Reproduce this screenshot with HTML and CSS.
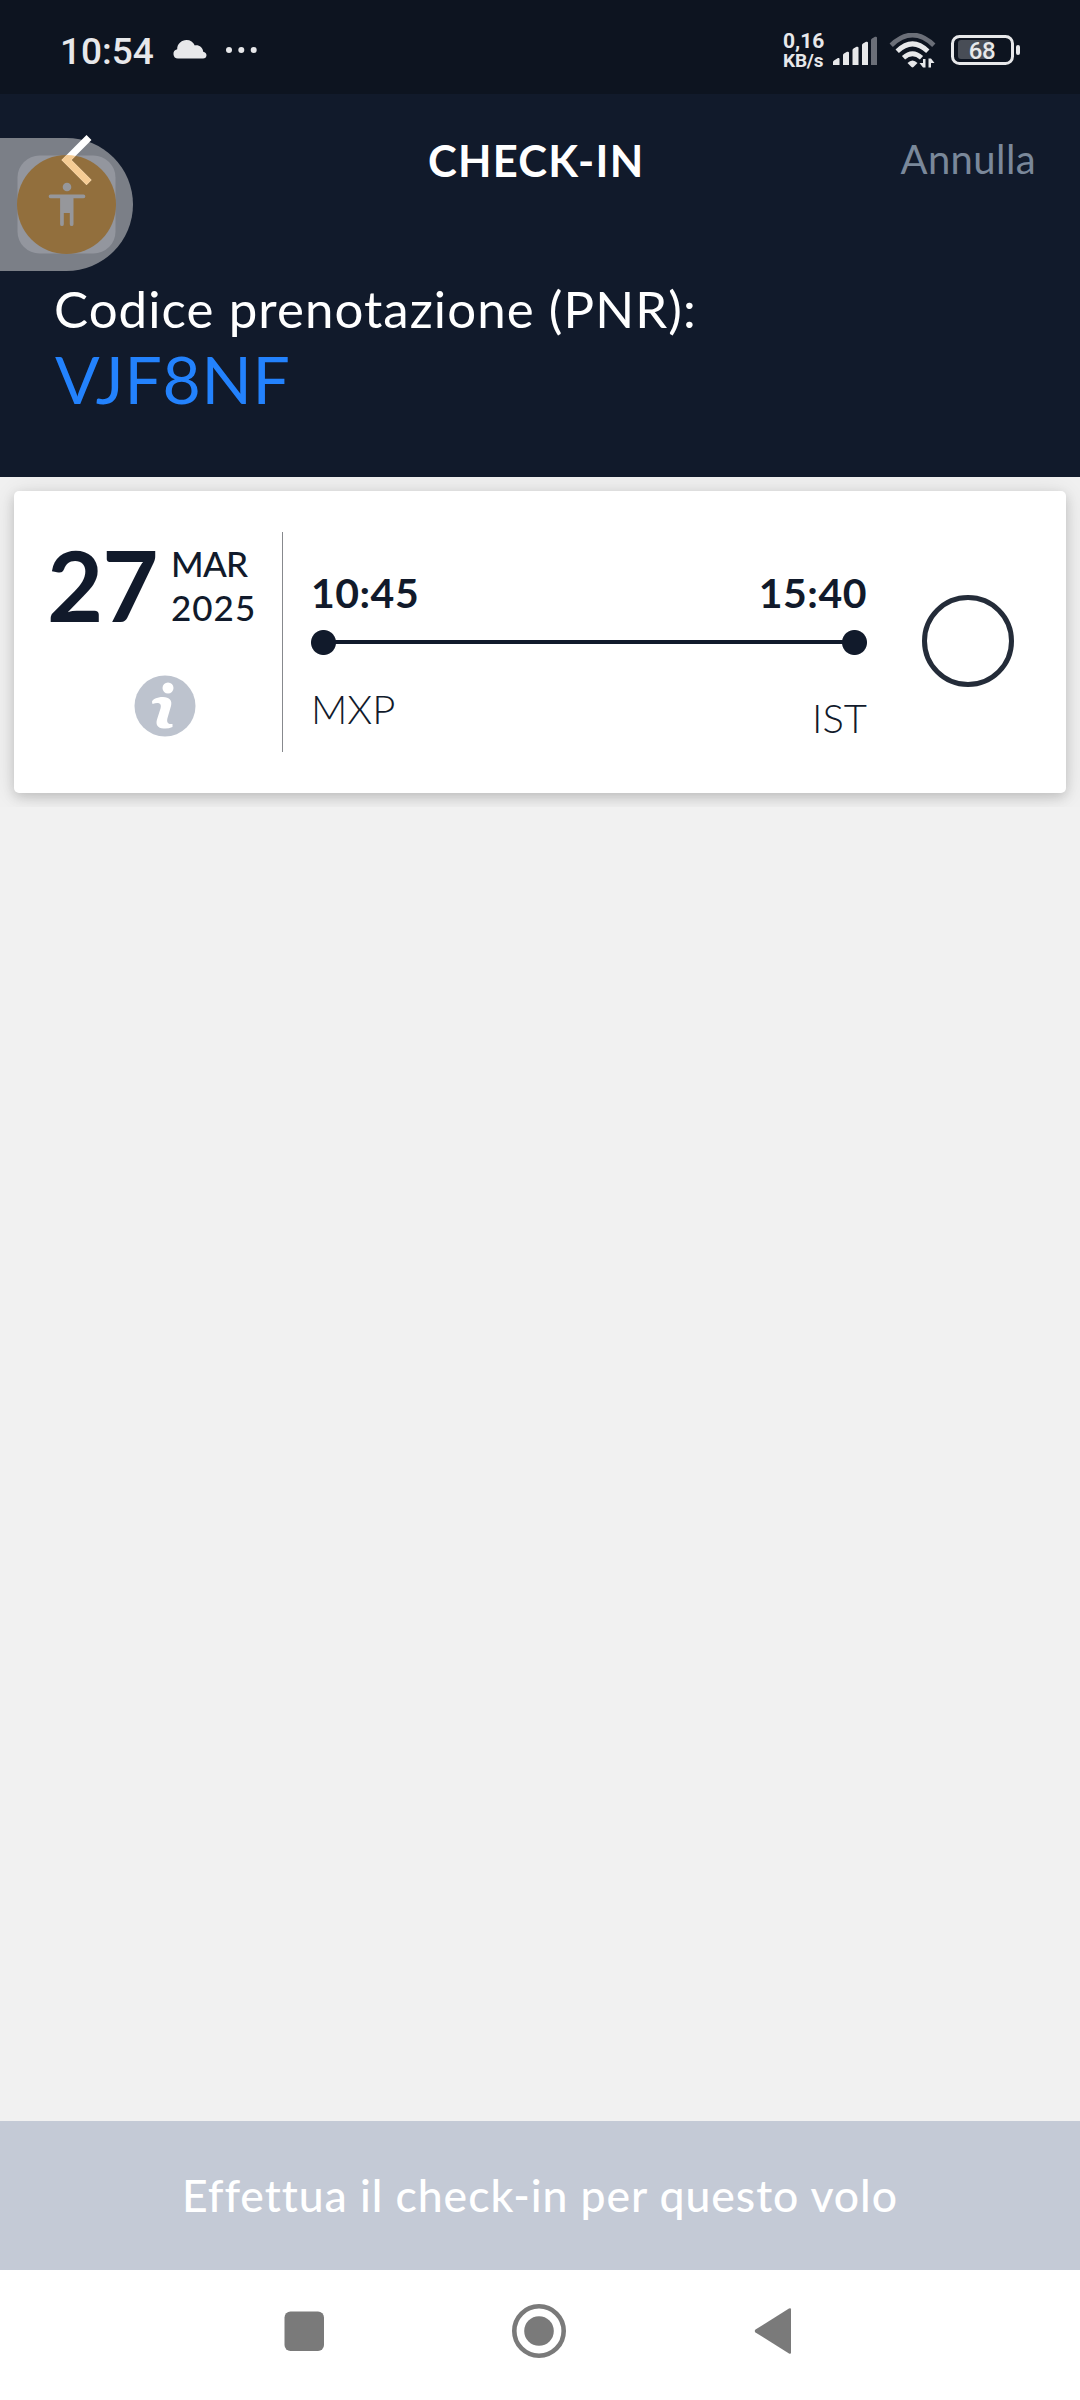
FILE: index.html
```html
<!DOCTYPE html>
<html lang="it">
<head>
<meta charset="utf-8">
<title>Check-in</title>
<link rel="stylesheet" href="styles.css">
</head>
<body>
<div class="screen">
  <div class="status">
    <span class="clock">10:54</span>
    <svg class="cloud" width="34" height="19" viewBox="0 0 34 19"><path d="M5 18.5a4.7 4.700 0 0 1-.8-9.300C4 4 8.500 0 13.500 0c3.800 0 6.900 2 8.300 5.500 4.200-.8 8 2 8.400 6.200 2 .3 3.300 1.700 3.300 3.500 0 2-1.500 3.300-3.500 3.300z"/></svg>
    <svg class="dots" width="32" height="8" viewBox="0 0 32 8"><circle cx="4" cy="4" r="3"/><circle cx="16.300" cy="4" r="3"/><circle cx="28.700" cy="4" r="3"/></svg>
    <span class="rate"><span>0,16</span><span class="unit">KB/s</span></span>
    <svg class="signal" width="44" height="30" viewBox="0 0 44 30"><path d="M0 29v-3q0-1 1-1.500l4-2.500q1.500-.5 1.500 1v6zM10 29V19q0-1 1-1.500l3-1.700q2-.5 2 1V29zM19.500 29V14q0-1 1-1.500l3-1.700q2-.5 2 1V29zM29 29V9q0-1 1-1.500l3-1.700q2-.5 2 1V29z"/><path class="dim" d="M38 29V4q0-1 1-1.500l3-1.700q2-.5 2 1V29z"/></svg>
    <svg class="wifi" width="48" height="36" viewBox="0 0 48 36"><path class="arc dim-arc" d="M2.200 12.200Q23.500-8 44.800 12.200"/><path class="arc" d="M8.200 18.300Q23.500 3.500 38.800 18.300M14.500 24.800q9-8 18 0"/><path d="M18.500 30q5-5 10 0l-4 4q-1 .8-2 0z"/><path d="M36.500 26v8.500H34l-3.500-4.500H34v-4zM39.500 34.500v-9H42l3.500 4.500H42v4.500z"/></svg>
    <svg class="battery" width="70" height="30" viewBox="0 0 70 30"><rect class="dim" x="7" y="5" width="33" height="19" rx="3"/><rect class="shell" x="1.500" y="1.500" width="60" height="27" rx="7"/><rect x="65" y="10" width="4" height="10" rx="2"/><text x="31" y="24">68</text></svg>
  </div>
  <header class="header">
    <div class="topbar">
      <h1 class="title">CHECK-IN</h1>
      <span class="cancel">Annulla</span>
    </div>
    <div class="pnr-label">Codice prenotazione (PNR):</div>
    <div class="pnr">VJF8NF</div>
    <svg class="access" width="134" height="136" viewBox="0 135 134 136">
      <defs><clipPath id="disc"><circle cx="66.500" cy="204.500" r="49.500"/></clipPath></defs>
      <path class="tab" d="M0 138h66.500a66.500 66.500 0 0 1 0 133H0z"/>
      <rect class="tile" x="17.500" y="155.500" width="98" height="98" rx="22"/>
      <circle class="disc" cx="66.500" cy="204.500" r="49.500"/>
      <g class="person"><circle cx="67" cy="187" r="4.300"/><path d="M50.500 194.500h33a1.800 1.800 0 0 1 0 3.700H73.500v26a1.800 1.800 0 0 1-3.700 0V213h-6v11.200a1.800 1.800 0 0 1-3.700 0v-26H50.500a1.800 1.800 0 0 1 0-3.700z"/></g>
      <path class="back" d="M89 137.500 66.500 160 89 182.500"/>
      <path class="back tinted" clip-path="url(#disc)" d="M89 137.500 66.500 160 89 182.500"/>
    </svg>
  </header>
  <main class="flights">
    <article class="card">
      <div class="date">
        <div class="date-row"><span class="day">27</span><div class="month"><span class="mon">MAR</span><span class="year">2025</span></div></div>
        <svg class="info" width="62" height="62" viewBox="0 0 62 62"><circle class="info-disc" cx="31" cy="31" r="30.500"/><circle cx="34" cy="13" r="5.500"/><path d="M18 27c0-2.500 5-5 11-5 6.500 0 9.500 3.500 8 9l-3.500 12c-1 4 0 6.500 5 6v3c-3 1.300-6 1.800-9 1.500-6-.3-8-4-6.500-9l3.500-11c1.300-4.500-1-7-8-4.500z"/></svg>
      </div>
      <div class="route">
        <div class="times"><span>10:45</span><span>15:40</span></div>
        <div class="track"></div>
        <div class="ports"><span class="from">MXP</span><span class="to">IST</span></div>
      </div>
      <span class="radio"></span>
    </article>
  </main>
  <div class="action">Effettua il check-in per questo volo</div>
  <nav class="nav">
    <svg width="1080" height="60" viewBox="0 2301 1080 60"><rect x="284.500" y="2311.500" width="39.500" height="39.500" rx="6"/><circle class="home-ring" cx="539" cy="2331" r="24.700"/><circle cx="539" cy="2331" r="14.800"/><path d="M755.500 2329.500 789 2308.500q2-1 2 1v43q0 2-2 1l-33.500-21q-1.500-1.500 0-3z"/></svg>
  </nav>
</div>
</body>
</html>
```
FILE: styles.css
```css
body { margin: 0; font-family: Lato, "Open Sans", sans-serif; color: #111a2b; }
.screen { width: 1080px; height: 2400px; display: flex; flex-direction: column; background: #f1f1f1; overflow: hidden; }

.status { height: 94px; box-sizing: border-box; background: #0d1420; display: flex; align-items: flex-start; font-family: Roboto, sans-serif; color: #e7e8ea; fill: #e7e8ea; padding: 0 59px 0 60px; }
.clock { font-size: 37px; font-weight: 500; line-height: 44px; margin-top: 30px; width: 113px; }
.cloud { margin-top: 40px; }
.dots { margin: 46px 0 0 18px; }
.rate { display: flex; flex-direction: column; margin: 32px 0 0 auto; width: 50px; font-size: 21px; line-height: 19px; font-weight: 700; white-space: nowrap; }
.unit { font-size: 19px; line-height: 20px; letter-spacing: -.2px; }
.signal { margin-top: 36px; }
.wifi { margin: 33px 0 0 12px; }
.battery { margin: 35px 0 0 14px; flex: none; }
.battery text { font-size: 24px; font-weight: 500; text-anchor: middle; letter-spacing: -.5px; }
.dim { fill: #6b6f78; }
.battery .dim { fill: #484d56; }
.arc, .shell { fill: none; stroke: #e7e8ea; stroke-width: 4.8; }
.shell { stroke-width: 3; }
.arc.dim-arc { stroke: #6b6f78; }

.header { position: relative; height: 383px; background: #111a2b; color: #fff; }
.topbar { display: flex; height: 130px; align-items: flex-start; justify-content: space-between; padding: 0 44px 0 428px; }
.title { margin: 40px 0 0; font-size: 43.5px; line-height: 52px; font-weight: 700; letter-spacing: 1.2px; }
.cancel { margin-top: 41px; font-size: 40px; line-height: 48px; color: #7a889a; letter-spacing: .4px; }
.pnr-label { padding: 55px 0 0 54px; font-size: 51px; line-height: 60px; letter-spacing: 1.07px; }
.pnr { padding: 4px 0 0 55px; font-size: 66px; line-height: 72px; color: #2382fd; letter-spacing: .7px; }
.access { position: absolute; left: 0; top: 41px; }
.tab { fill: #7b7f87; }
.tile { fill: #93969e; }
.disc { fill: #926f3d; }
.person { fill: #96979b; }
.back { fill: none; stroke: #fff; stroke-width: 7; }
.tinted { stroke: #f6cc94; }

.flights { height: 302px; padding: 14px; overflow: hidden; }
.card { height: 302px; box-sizing: border-box; background: #fff; border-radius: 5px; box-shadow: 0 4px 12px rgba(0,0,0,.16), 0 2px 30px rgba(0,0,0,.1); display: flex; }
.date { width: 268px; height: 220px; margin-top: 41px; border-right: 1px solid #87898d; }
.date-row { display: flex; height: 143px; padding-left: 33px; }
.day { font-size: 97px; line-height: 116px; font-weight: 700; width: 124px; margin-top: -5px; letter-spacing: -1px; }
.month { display: flex; flex-direction: column; font-size: 35px; line-height: 44px; margin-top: 9px; font-weight: 500; }
.mon { letter-spacing: -.7px; }
.year { letter-spacing: 1px; }
.info { margin-left: 120px; fill: #fff; display: block; }
.info-disc { fill: #bdc3ce; }
.route { width: 556px; margin: 78px 0 0 28px; }
.times { display: flex; justify-content: space-between; font-size: 41px; line-height: 48px; font-weight: 700; letter-spacing: .5px; }
.track { height: 25px; margin-top: 13px; background: radial-gradient(circle at 12.5px 12.5px, #111a2b 12px, transparent 13px), radial-gradient(circle at 543.5px 12.5px, #111a2b 12px, transparent 13px), linear-gradient(#111a2b, #111a2b) 12px 10px / 530px 4px no-repeat; }
.ports { display: flex; justify-content: space-between; font-size: 40px; line-height: 48px; font-weight: 300; margin-top: 30px; }
.to { margin-top: 9px; }
.radio { width: 82px; height: 82px; border: 5px solid #242c39; border-radius: 50%; margin: 104px 0 0 55px; }

.action { margin-top: auto; height: 149px; background: #c4cad6; color: #fff; font-size: 44.5px; line-height: 147px; font-weight: 500; text-align: center; letter-spacing: .95px; }
.nav { height: 130px; background: #fff; fill: #7a7a7a; }
.nav svg { display: block; margin-top: 31px; }
.home-ring { fill: none; stroke: #7a7a7a; stroke-width: 4.6; }
```
